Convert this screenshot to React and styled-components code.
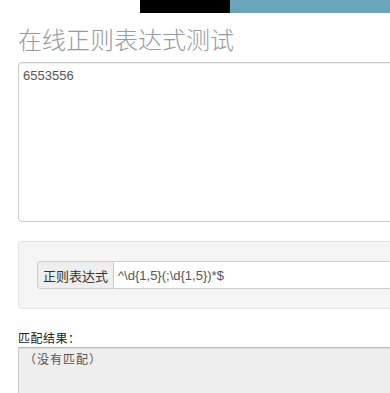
import React from "react";
import styled, { createGlobalStyle } from "styled-components";

const Global = createGlobalStyle`
  html, body { margin: 0; padding: 0; background: #fff; overflow: hidden; }
  body {
    font-family: "Liberation Sans", Arial, "Noto Sans CJK SC", sans-serif;
    color: #333;
  }
`;

const TopBar = styled.div`
  display: flex;
  height: 13px;
`;

const BarSeg = styled.div`
  width: ${(p) => p.$w || "auto"};
  flex: ${(p) => (p.$grow ? 1 : "none")};
  background: ${(p) => p.$bg};
`;

const Page = styled.div`
  width: 640px;
  padding: 0 18px;
  display: flex;
  flex-direction: column;
`;

const Title = styled.h1`
  margin: 9px 0 6px;
  font-family: "Noto Sans CJK SC", sans-serif;
  font-weight: 300;
  font-size: 24px;
  line-height: 34px;
  color: #959ba3;
`;

const TextArea = styled.div`
  box-sizing: border-box;
  height: 160px;
  border: 1px solid #ccc;
  border-radius: 4px;
  box-shadow: inset 0 1px 1px rgba(0, 0, 0, 0.075);
  padding: 4px 4px;
  font-size: 13px;
  line-height: 18px;
  color: #555;
`;

const Well = styled.div`
  margin-top: 19px;
  background: #f5f5f5;
  border: 1px solid #e3e3e3;
  border-radius: 4px;
  padding: 19px 18px;
`;

const InputGroup = styled.div`
  display: flex;
  height: 28px;
  box-sizing: border-box;
`;

const Addon = styled.span`
  display: flex;
  align-items: center;
  box-sizing: border-box;
  padding: 0 5px;
  background: #eee;
  border: 1px solid #ccc;
  border-radius: 3px 0 0 3px;
  font-family: "Noto Sans CJK SC", sans-serif;
  font-size: 13px;
  color: #333;
`;

const Input = styled.div`
  flex: 1;
  display: flex;
  align-items: center;
  box-sizing: border-box;
  border: 1px solid #ccc;
  border-left: none;
  background: #fff;
  padding: 0 4px;
  font-size: 13px;
  color: #555;
`;

const Label = styled.div`
  margin-top: 20px;
  font-family: "Noto Sans CJK SC", sans-serif;
  font-size: 12px;
  line-height: 18px;
  color: #222;
  letter-spacing: 0.5px;
`;

const Result = styled.div`
  height: 80px;
  background: #eee;
  border: 1px solid #ccc;
  border-top-color: #bbb;
  box-shadow: inset 0 1px 1px rgba(0, 0, 0, 0.08);
  padding: 2px 3px 2px 5px;
  font-family: "Noto Sans CJK SC", sans-serif;
  font-size: 12px;
  line-height: 17px;
  letter-spacing: 1px;
  color: #555;
`;

export default function App() {
  return (
    <>
      <Global />
      <TopBar>
        <BarSeg $w="140px" $bg="#fff" />
        <BarSeg $w="90px" $bg="#000" />
        <BarSeg $grow $bg="#6aa5ba" />
      </TopBar>
      <Page>
        <Title>在线正则表达式测试</Title>
        <TextArea>6553556</TextArea>
        <Well>
          <InputGroup>
            <Addon>正则表达式</Addon>
            <Input>{"^\\d{1,5}(;\\d{1,5})*$"}</Input>
          </InputGroup>
        </Well>
        <Label>匹配结果：</Label>
        <Result>（没有匹配）</Result>
      </Page>
    </>
  );
}
